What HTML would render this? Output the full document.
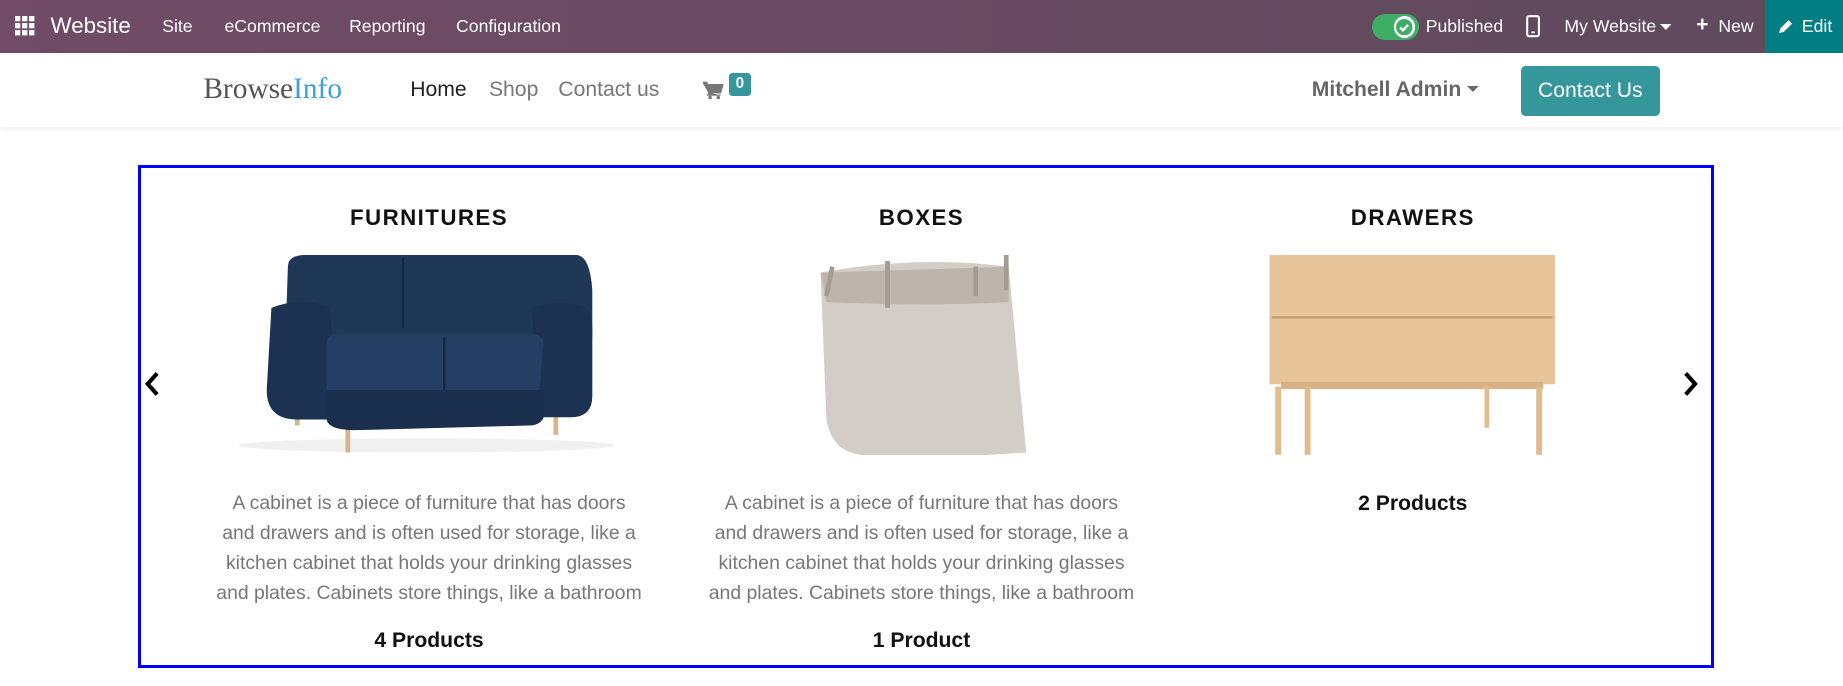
<!DOCTYPE html>
<html><head><meta charset="utf-8"><style>
html{zoom:1.17538}
*{box-sizing:border-box;margin:0;padding:0}
body{width:1568px;height:584px;overflow:hidden;background:#fff;font-family:"Liberation Sans",Roboto,sans-serif;position:relative}
.top{position:absolute;left:0;top:0;width:1568px;height:45px;background:linear-gradient(90deg,#714b67,#5f4a5c);color:#fff}
.top span{position:absolute;top:14px;font-size:15px}
.edit{position:absolute;right:0;top:0;width:66px;height:45px;background:#017e84}
.hdr{position:absolute;top:45px;left:0;width:1568px;height:63px;background:#fff;box-shadow:0 2px 4px rgba(0,0,0,.07)}
.hdr span{position:absolute}
.box{position:absolute;left:117px;top:140px;width:1341px;height:428px;border:3px solid #0000ff}
.t{position:absolute;width:400px;text-align:center;font-weight:bold;font-size:19px;letter-spacing:1.2px;top:174px;color:#111}
.p{position:absolute;width:400px;text-align:center;font-size:16.5px;line-height:25.5px;color:#777;top:416px;height:100px;overflow:hidden;white-space:nowrap}
.n{position:absolute;width:300px;text-align:center;font-weight:bold;font-size:18px;color:#111}
</style></head><body>
<div class="top">
<svg style="position:absolute;left:13px;top:14px" width="17" height="17"><g fill="#fff"><rect x="0" y="0" width="4.5" height="4.5"/><rect x="6" y="0" width="4.5" height="4.5"/><rect x="12" y="0" width="4.5" height="4.5"/><rect x="0" y="6" width="4.5" height="4.5"/><rect x="6" y="6" width="4.5" height="4.5"/><rect x="12" y="6" width="4.5" height="4.5"/><rect x="0" y="12" width="4.5" height="4.5"/><rect x="6" y="12" width="4.5" height="4.5"/><rect x="12" y="12" width="4.5" height="4.5"/></g></svg>
<span style="left:43px;top:11px;font-size:19px">Website</span>
<span style="left:138px">Site</span><span style="left:191px">eCommerce</span><span style="left:297px">Reporting</span><span style="left:388px">Configuration</span>
<div style="position:absolute;left:1167px;top:12px;width:40px;height:22px;border-radius:11px;background:#3fae65"></div>
<div style="position:absolute;left:1186px;top:14px;width:18px;height:18px;border-radius:9px;background:#fff"></div>
<svg style="position:absolute;left:1188px;top:16px" width="14" height="14"><circle cx="7" cy="7" r="7" fill="#3fae65"/><path d="M3.5 7.2l2.4 2.4 4.4-4.6" stroke="#fff" stroke-width="2" fill="none"/></svg>
<span style="left:1213px">Published</span>
<svg style="position:absolute;left:1298px;top:13px" width="12" height="19"><rect x="1" y="1" width="10" height="17" rx="1.5" fill="none" stroke="#fff" stroke-width="1.8"/><rect x="4.5" y="14" width="3" height="1.5" fill="#fff"/></svg>
<span style="left:1331px">My Website</span>
<svg style="position:absolute;left:1412px;top:20px" width="10" height="6"><path d="M0 0h10L5 5z" fill="#fff"/></svg>
<span style="left:1443px;top:11px;font-size:18px;font-weight:bold">+</span><span style="left:1462px">New</span>
<div class="edit"><svg style="position:absolute;left:11px;top:16px" width="13" height="13"><path d="M1 12l1-4 7-7 3 3-7 7z" fill="#fff"/></svg><span style="left:31px">Edit</span></div>
</div>
<div class="hdr">
<span style="left:173px;top:17px;font-family:'Liberation Serif',serif;font-size:25px;color:#555">Browse<span style="position:static;color:#3aa0e0">Info</span></span>
<span style="left:349px;top:21px;font-size:18px;color:#222">Home</span>
<span style="left:416px;top:21px;font-size:18px;color:#777">Shop</span>
<span style="left:475px;top:21px;font-size:18px;color:#777">Contact us</span>
<svg style="position:absolute;left:598px;top:24px" width="18" height="16"><path d="M0 1h3l1 2h13l-2 7H5zM5 10l-1 2h11" fill="#777" stroke="#777" stroke-width="1"/><circle cx="6" cy="14" r="1.5" fill="#777"/><circle cx="13" cy="14" r="1.5" fill="#777"/></svg>
<span style="left:620px;top:17px;width:19px;height:20px;border-radius:3px;background:#35979c;color:#fff;font-size:13px;font-weight:bold;text-align:center;line-height:18px">0</span>
<span style="left:1116px;top:21px;font-size:18px;font-weight:bold;color:#666">Mitchell Admin</span>
<svg style="position:absolute;left:1248px;top:28px" width="10" height="6"><path d="M0 0h10L5 5z" fill="#666"/></svg>
<span style="left:1294px;top:11px;width:118px;height:43px;border-radius:4px;background:#35979c;color:#fff;font-size:18px;text-align:center;line-height:42px">Contact Us</span>
</div>
<div class="box"></div>
<div class="t" style="left:165px">FURNITURES</div>
<div class="t" style="left:584px">BOXES</div>
<div class="t" style="left:1002px">DRAWERS</div>
<svg style="position:absolute;left:183px;top:217px" width="344" height="170">
<ellipse cx="180" cy="162" rx="160" ry="6" fill="#f0f0f0"/>
<rect x="68" y="125" width="4" height="20" fill="#d7b48a"/><rect x="111" y="140" width="4" height="28" fill="#d7b48a"/><rect x="288" y="125" width="4" height="28" fill="#d7b48a"/>
<path d="M62 10q0-10 15-10h230q12 0 14 30v40H60z" fill="#1f3858"/>
<path d="M160 2v60" stroke="#15294a" stroke-width="2"/>
<path d="M48 45q25-10 50 0l5 95H70q-26 0-26-25z" fill="#1b3253"/>
<path d="M270 45q25-8 46 0q5 5 5 20v55q0 18-18 18h-30z" fill="#1b3253"/>
<path d="M95 75q0-8 12-8h160q15 0 12 12l-4 50q-2 10-15 10H100q-5 0-5-10z" fill="#243f63"/>
<path d="M95 115h185v20q0 8-10 10l-150 4q-25 0-25-10z" fill="#1a2f4e"/>
<path d="M195 70v45" stroke="#15294a" stroke-width="2"/>
</svg>
<svg style="position:absolute;left:598px;top:217px" width="277" height="170">
<path d="M100 15q80-15 160-5l15 158q-60 5-140 2q-25-2-30-30z" fill="#d2cdc7"/>
<path d="M100 15l160-5l0 30q-70 4-155 0z" fill="#bdb5ac"/>
<path d="M110 10l-5 25M157 5v40M258 0v30M232 10v25" stroke="#a39c94" stroke-width="4"/>
</svg>
<svg style="position:absolute;left:1015px;top:217px" width="315" height="170">
<rect x="65" y="0" width="243" height="110" fill="#e8c49a"/>
<rect x="67" y="52" width="239" height="2" fill="#c49b6c"/>
<rect x="75" y="108" width="223" height="6" fill="#d8b282"/>
<rect x="70" y="112" width="5" height="58" fill="#e0bb8c"/><rect x="95" y="112" width="5" height="58" fill="#e0bb8c"/><rect x="248" y="112" width="4" height="35" fill="#e0bb8c"/><rect x="292" y="112" width="5" height="58" fill="#e0bb8c"/>
</svg>
<svg style="position:absolute;left:122px;top:316px" width="16" height="22"><path d="M12 2L4 11l8 9" stroke="#000" stroke-width="3.5" fill="none"/></svg>
<svg style="position:absolute;left:1430px;top:316px" width="16" height="22"><path d="M4 2l8 9-8 9" stroke="#000" stroke-width="3.5" fill="none"/></svg>
<div class="p" style="left:165px">A cabinet is a piece of furniture that has doors<br>and drawers and is often used for storage, like a<br>kitchen cabinet that holds your drinking glasses<br>and plates. Cabinets store things, like a bathroom<br>cabinet for medicines.</div>
<div class="p" style="left:584px">A cabinet is a piece of furniture that has doors<br>and drawers and is often used for storage, like a<br>kitchen cabinet that holds your drinking glasses<br>and plates. Cabinets store things, like a bathroom<br>cabinet for medicines.</div>
<div class="n" style="left:215px;top:535px">4 Products</div>
<div class="n" style="left:634px;top:535px">1 Product</div>
<div class="n" style="left:1052px;top:419px">2 Products</div>
</body></html>
